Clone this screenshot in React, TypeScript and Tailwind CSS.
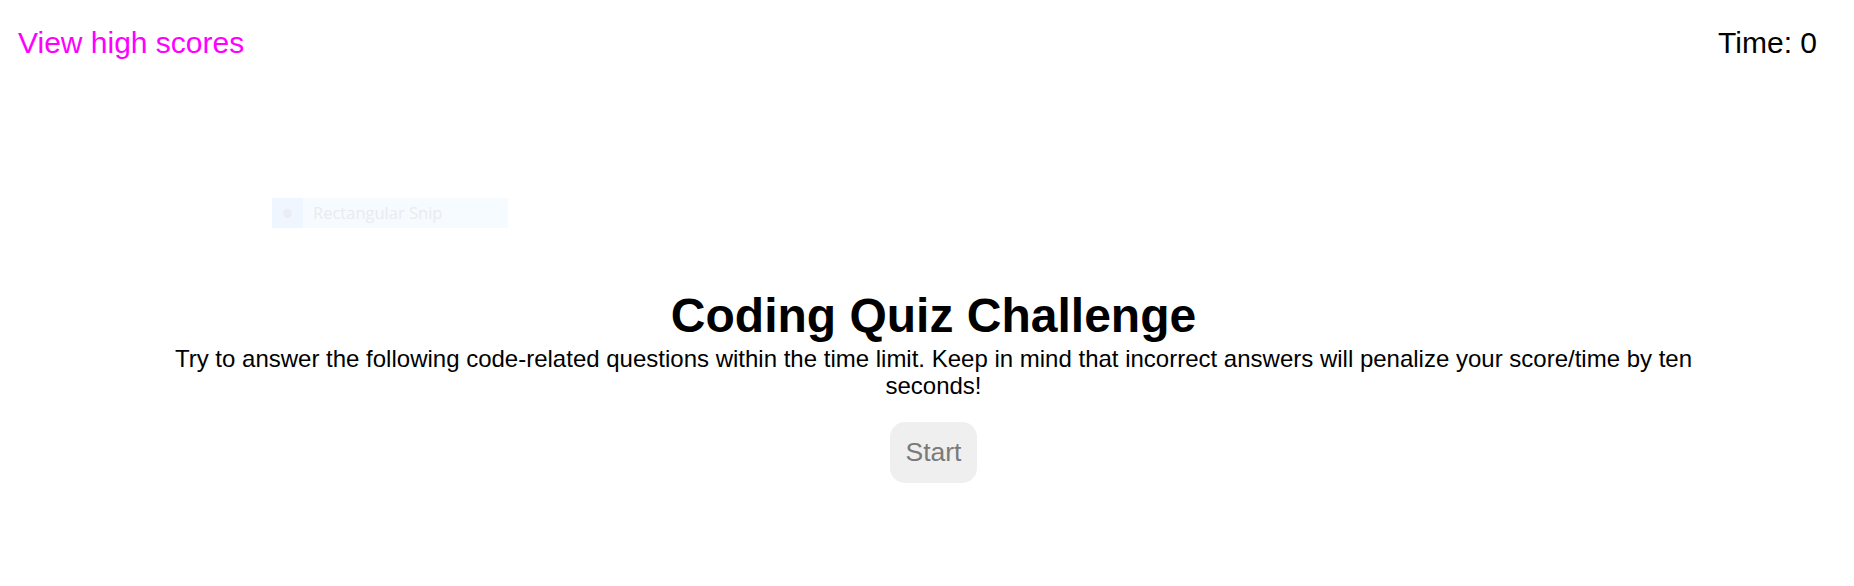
import React from "react";

export default function App() {
	return (
		<div
			className="relative min-h-[586px] w-full bg-white text-black"
			style={{ fontFamily: '"Liberation Sans", Arial, sans-serif' }}
		>
			{/* HEADER */}
			<header className="flex items-start justify-between pl-[18px] pr-[37px] pt-[26px]">
				<a href="#" className="text-[30px] leading-[34px] text-[#ff00ff]">
					View high scores
				</a>
				<span className="text-[30px] leading-[34px]">Time: 0</span>
			</header>

			{/* SNIP TOOL LEFTOVER */}
			<div
				className="absolute left-[272px] top-[198px] flex h-[30px] w-[236px] items-center bg-[#f6fbff]"
				style={{ fontFamily: '"Open Sans", "Noto Sans", sans-serif' }}
			>
				<div className="flex h-full w-[31px] items-center justify-center bg-[#eff6ff]">
					<div className="h-[9px] w-[9px] rounded-full bg-[#ebedf0]" />
				</div>
				<span className="ml-[10px] text-[16.5px] text-[#e9ebed]">Rectangular Snip</span>
			</div>

			{/* BODY */}
			<main className="flex flex-col items-center pl-[153px] pr-[140px] pt-[228px] text-center">
				<h1 className="text-[48px] font-bold leading-[55px]">Coding Quiz Challenge</h1>
				<p className="mt-[2px] text-[24px] leading-[27px]">
					Try to answer the following code-related questions within the time limit. Keep in mind
					that incorrect answers will penalize your score/time by ten seconds!
				</p>
				<button className="mt-[23px] rounded-[15px] bg-[#efefef] px-[16px] py-[15px] text-[26.5px] leading-[31px] text-[#7a7a7a]">
					Start
				</button>
			</main>
		</div>
	);
}
